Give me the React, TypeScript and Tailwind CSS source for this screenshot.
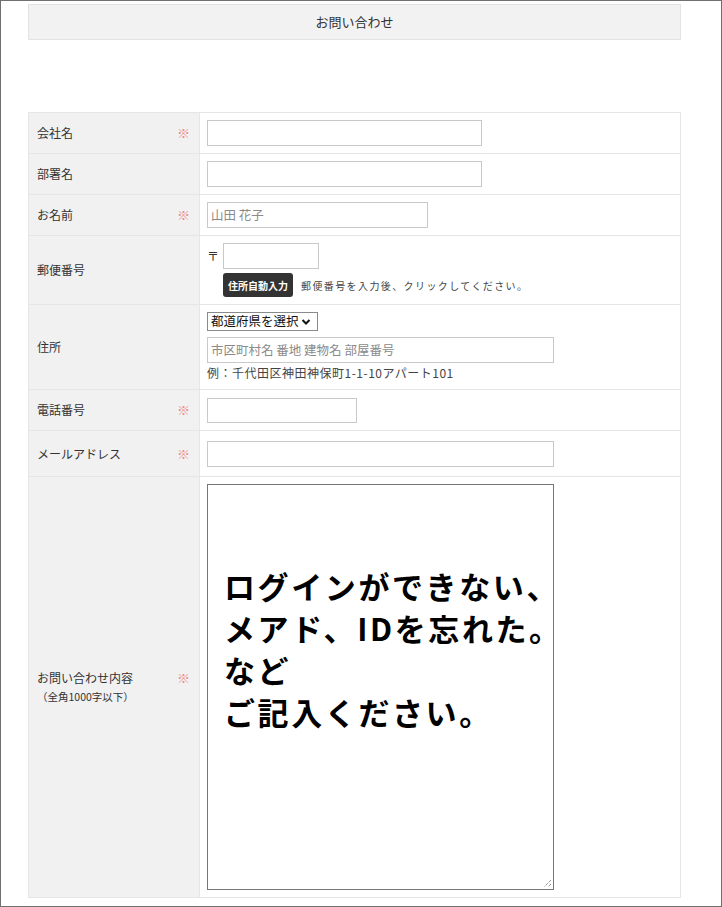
import React from "react";

const font = { fontFamily: '"Noto Sans CJK JP", "Noto Sans", sans-serif' };

function Req() {
  return <span className="text-[13px] leading-[18px] text-[#f08a8a] mr-[9px]">※</span>;
}

function Row({
  h,
  label,
  req,
  children,
  sub,
  last,
}: {
  h: string;
  label: string;
  req?: boolean;
  children?: React.ReactNode;
  sub?: string;
  last?: boolean;
}) {
  return (
    <div className={`flex ${h} ${last ? "" : "border-b border-[#e6e6e6]"}`}>
      <div className="w-[171px] shrink-0 bg-[#f1f1f1] border-r border-[#e6e6e6] flex items-center pl-[8px]">
        <div className="flex w-full items-start justify-between">
          <div className="flex flex-col">
            <span className="text-[12px] text-[#333] leading-[18px]">{label}</span>
            {sub && <span className="text-[10.5px] text-[#333] leading-[16px] mt-[2px]">{sub}</span>}
          </div>
          {req && <Req />}
        </div>
      </div>
      <div className="flex-1 pl-[7px] flex flex-col justify-center">{children}</div>
    </div>
  );
}

function Input({ w, placeholder, h = "h-[26px]" }: { w: string; placeholder?: string; h?: string }) {
  return (
    <div className={`${w} ${h} border border-[#c9c9c9] bg-white flex items-center px-[3px]`}>
      {placeholder && <span className="text-[12.5px] text-[#8a8a8a]">{placeholder}</span>}
    </div>
  );
}

export default function App() {
  return (
    <div style={font} className="w-[722px] h-[907px] border border-[#707070] bg-white box-border overflow-hidden">
      <div className="ml-[27px] mt-[3px] w-[653px] h-[36px] bg-[#f2f2f2] border border-[#e3e3e3] flex items-center justify-center">
        <span className="text-[13px] text-[#333]">お問い合わせ</span>
      </div>
      <div className="ml-[27px] mt-[72px] w-[653px] border border-[#e6e6e6]">
        <Row h="h-[41px]" label="会社名" req>
          <Input w="w-[275px]" />
        </Row>
        <Row h="h-[41px]" label="部署名">
          <Input w="w-[275px]" />
        </Row>
        <Row h="h-[41px]" label="お名前" req>
          <Input w="w-[221px]" placeholder="山田 花子" />
        </Row>
        <Row h="h-[69px]" label="郵便番号">
          <div className="flex items-center gap-[4px]">
            <span className="text-[12px] text-[#333]">〒</span>
            <Input w="w-[96px]" />
          </div>
          <div className="flex items-center ml-[16px] mt-[4px]">
            <div className="h-[24px] px-[5px] bg-[#333] rounded-[3px] flex items-center">
              <span className="text-[10px] font-bold text-white">住所自動入力</span>
            </div>
            <span className="ml-[8px] text-[10px] text-[#444] tracking-[1.4px]">
              郵便番号を入力後、クリックしてください。
            </span>
          </div>
        </Row>
        <Row h="h-[85px]" label="住所">
          <div className="w-[111px] h-[19px] border border-[#8a8a8a] flex items-center pl-[3px] gap-[2px]">
            <span className="text-[12.5px] text-[#111]">都道府県を選択</span>
            <svg width="10" height="8" viewBox="0 0 10 8">
              <path d="M1.5 2 L5 5.5 L8.5 2" stroke="#111" strokeWidth="2" fill="none" />
            </svg>
          </div>
          <div className="mt-[6px]">
            <Input w="w-[347px]" placeholder="市区町村名 番地 建物名 部屋番号" />
          </div>
          <span className="text-[12px] text-[#444] mt-[1px] leading-[18px] tracking-[0.5px]">
            例：千代田区神田神保町1-1-10アパート101
          </span>
        </Row>
        <Row h="h-[41px]" label="電話番号" req>
          <Input w="w-[150px]" h="h-[25px]" />
        </Row>
        <Row h="h-[46px]" label="メールアドレス" req>
          <Input w="w-[347px]" />
        </Row>
        <Row h="h-[420px]" label="お問い合わせ内容" req sub="（全角1000字以下）" last>
          <div className="relative w-[347px] h-[406px] border border-[#767676] bg-white pl-[16px] pt-[80px]">
            <div className="text-[31px] font-bold text-black leading-[42px] tracking-[2.6px] whitespace-nowrap">
              <div>ログインができない、</div>
              <div>メアド、IDを忘れた。</div>
              <div>など</div>
              <div>ご記入ください。</div>
            </div>
            <svg className="absolute right-[1px] bottom-[1px]" width="9" height="9" viewBox="0 0 9 9">
              <path d="M8 1 L1 8 M8 5 L5 8" stroke="#666" strokeWidth="1" strokeDasharray="1 1" />
            </svg>
          </div>
        </Row>
      </div>
    </div>
  );
}
